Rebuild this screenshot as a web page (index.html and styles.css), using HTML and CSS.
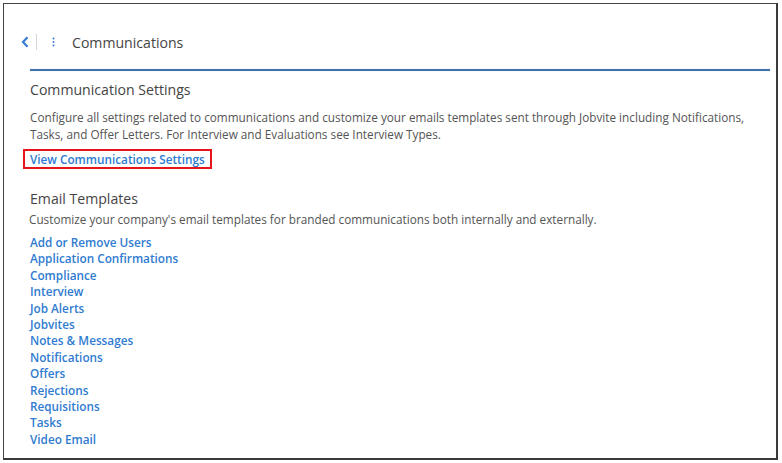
FILE: index.html
```html
<!DOCTYPE html>
<html>
<head>
<meta charset="utf-8">
<link rel="stylesheet" href="styles.css">
</head>
<body>
<div class="frame">
  <div class="header">
    <span class="back">
      <svg width="8" height="12" viewBox="0 0 8 12"><path d="M6.5 1.2 L2 6 L6.5 10.8" fill="none" stroke="#3a7bd5" stroke-width="2.2"/></svg>
    </span>
    <span class="sep"></span>
    <span class="kebab">
      <svg width="3" height="10" viewBox="0 0 3 10"><circle cx="1.5" cy="1.5" r="1" fill="#3a7bd5"/><circle cx="1.5" cy="5" r="1" fill="#3a7bd5"/><circle cx="1.5" cy="8.5" r="1" fill="#3a7bd5"/></svg>
    </span>
    <span class="title">Communications</span>
  </div>
  <div class="content">
    <div class="rule"></div>
    <h2 class="section-title">Communication Settings</h2>
    <p class="desc">Configure all settings related to communications and customize your emails templates sent through Jobvite including Notifications, Tasks, and Offer Letters. For Interview and Evaluations see Interview Types.</p>
    <div class="settings-link"><a class="link boxed">View Communications Settings</a></div>
    <h2 class="section-title email">Email Templates</h2>
    <p class="sub">Customize your company's email templates for branded communications both internally and externally.</p>
    <ul class="links">
      <li><a class="link">Add or Remove Users</a></li>
      <li><a class="link">Application Confirmations</a></li>
      <li><a class="link">Compliance</a></li>
      <li><a class="link">Interview</a></li>
      <li><a class="link">Job Alerts</a></li>
      <li><a class="link">Jobvites</a></li>
      <li><a class="link">Notes &amp; Messages</a></li>
      <li><a class="link">Notifications</a></li>
      <li><a class="link">Offers</a></li>
      <li><a class="link">Rejections</a></li>
      <li><a class="link">Requisitions</a></li>
      <li><a class="link">Tasks</a></li>
      <li><a class="link">Video Email</a></li>
    </ul>
  </div>
</div>
</body>
</html>
```
FILE: styles.css
```css
html, body {
  margin: 0;
  padding: 0;
  background: #fff;
}
body {
  font-family: "Open Sans", "Noto Sans", sans-serif;
  color: #555;
}
.frame {
  box-sizing: border-box;
  margin: 3px 0 0 3px;
  width: 775px;
  height: 457px;
  border-left: 1px solid #444;
  border-top: 1px solid #444;
  border-right: 2px solid #3a3a3a;
  border-bottom: 2px solid #3a3a3a;
  background: #fff;
}
.header {
  display: flex;
  align-items: center;
  height: 24px;
  margin-top: 26px;
  padding-left: 17px;
}
.back {
  display: flex;
  width: 8px;
}
.sep {
  width: 1px;
  height: 16px;
  background: #d6d6d6;
  margin-left: 7px;
}
.kebab {
  display: flex;
  margin-left: 15px;
}
.title {
  margin-left: 17px;
  font-size: 14.1px;
  color: #444;
}
.content {
  padding: 0 6px 0 26px;
}
.rule {
  margin-top: 15px;
  height: 2px;
  background: #3d72ab;
  box-shadow: 0 0 1px #a9c4e2;
}
.section-title {
  margin: 9px 0 0 0;
  font-size: 14.1px;
  font-weight: 400;
  color: #444;
  line-height: 20px;
}
.desc {
  margin: 9px 0 0 0;
  font-size: 11.75px;
  line-height: 17px;
  color: #555;
}
.settings-link {
  margin-top: 4px;
}
.link {
  color: #2f7bd0;
  font-weight: 600;
  font-size: 11.75px;
  text-decoration: none;
}
.boxed {
  display: inline-block;
  border: 2px solid #e8141c;
  padding: 0 5px;
  margin-left: -7px;
  line-height: 16px;
}
.section-title.email {
  margin-top: 20px;
}
.sub {
  margin: 2px 0 0 -1px;
  font-size: 11.75px;
  line-height: 17px;
  color: #555;
}
.links {
  list-style: none;
  margin: 6px 0 0 0;
  padding: 0;
}
.links li {
  font-size: 11.75px;
  line-height: 16.4px;
}
```
